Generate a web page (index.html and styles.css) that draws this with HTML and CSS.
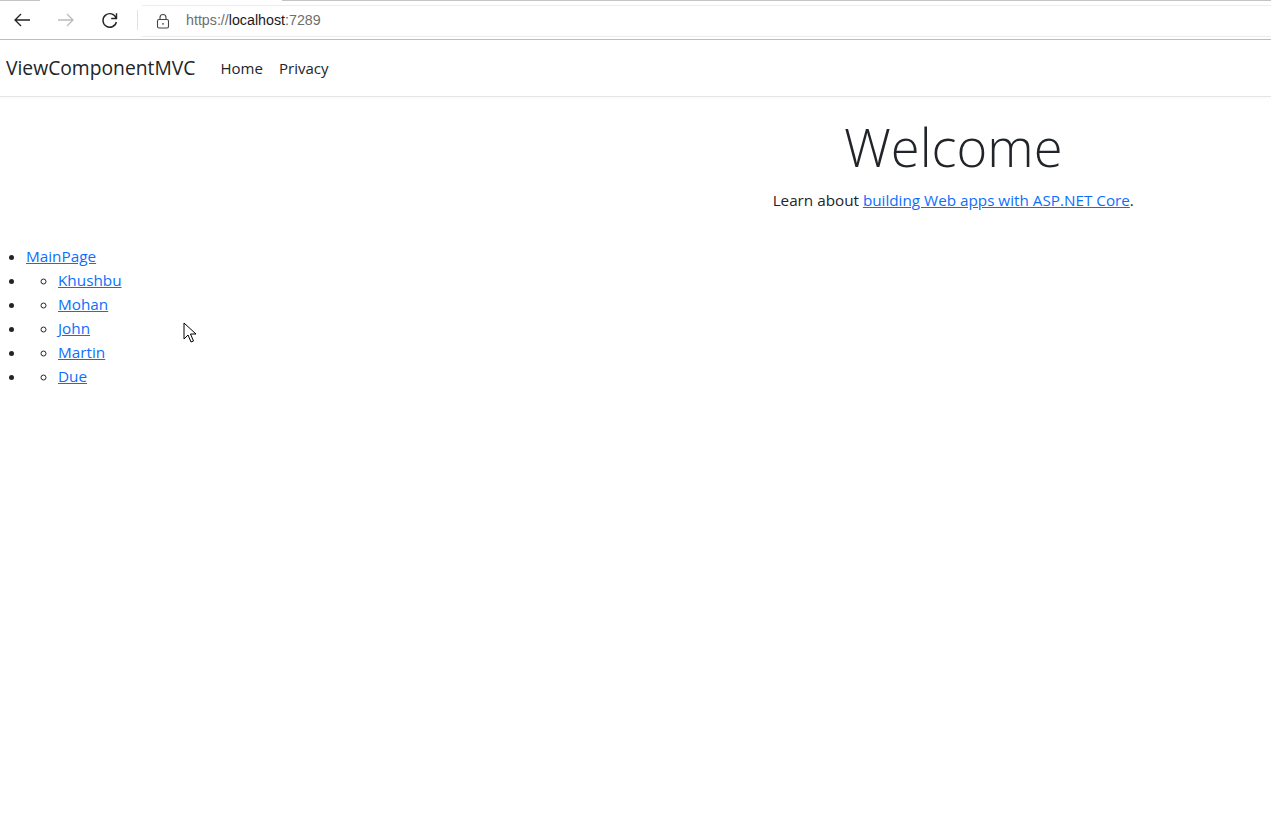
FILE: index.html
```html
<!DOCTYPE html>
<html lang="en">
<head>
  <meta charset="UTF-8">
  <title>Home Page - ViewComponentMVC</title>
  <link rel="stylesheet" href="styles.css">
</head>
<body>
  <div class="chrome">
    <div class="tabline">
      <span class="tab-left"></span>
      <span class="tab-gap"></span>
      <span class="tab-right"></span>
    </div>
    <div class="toolbar">
      <button class="tool" title="Back">
        <svg width="20" height="20" viewBox="0 0 20 20"><path d="M18 10H3M9 4L3 10l6 6" fill="none" stroke="#222" stroke-width="1.3"/></svg>
      </button>
      <button class="tool" title="Forward">
        <svg width="20" height="20" viewBox="0 0 20 20"><path d="M2 10h15M11 4l6 6-6 6" fill="none" stroke="#bbb" stroke-width="1.3"/></svg>
      </button>
      <button class="tool" title="Refresh">
        <svg width="20" height="20" viewBox="0 0 20 20"><path d="M16.2 8.2A6.8 6.8 0 1 0 16.4 12" fill="none" stroke="#222" stroke-width="1.4"/><path d="M16.5 3.2v5.3h-5.3" fill="none" stroke="#222" stroke-width="1.4"/></svg>
      </button>
      <span class="sep"></span>
      <div class="address">
        <svg class="lock" width="14" height="16" viewBox="0 0 14 16"><rect x="1.5" y="6.5" width="11" height="8.5" rx="1.5" fill="none" stroke="#444" stroke-width="1.1"/><path d="M4 6.5V4.5a3 3 0 0 1 6 0v2" fill="none" stroke="#444" stroke-width="1.1"/><circle cx="7" cy="10.8" r="0.9" fill="#444"/></svg>
        <span class="url"><span class="dim">https://</span>localhost<span class="dim">:7289</span></span>
      </div>
    </div>
  </div>

  <header class="navbar">
    <a class="brand" href="#">ViewComponentMVC</a>
    <nav class="nav-links">
      <a href="#">Home</a>
      <a href="#">Privacy</a>
    </nav>
  </header>

  <main class="content">
    <div class="hero">
      <div></div>
      <div class="text-center">
        <h1 class="display-4">Welcome</h1>
        <p>Learn about <a href="#">building Web apps with ASP.NET Core</a>.</p>
      </div>
    </div>

    <ul class="menu">
      <li><a href="#">MainPage</a></li>
      <li><ul><li><a href="#">Khushbu</a></li></ul></li>
      <li><ul><li><a href="#">Mohan</a></li></ul></li>
      <li><ul><li><a href="#">John</a></li></ul></li>
      <li><ul><li><a href="#">Martin</a></li></ul></li>
      <li><ul><li><a href="#">Due</a></li></ul></li>
    </ul>
  </main>

  <svg class="cursor" width="14" height="22" viewBox="0 0 14 22"><path d="M1 1v16l4-4 3 7 2.5-1-3-7h5.5z" fill="#fff" stroke="#000" stroke-width="1"/></svg>
</body>
</html>
```

FILE: styles.css
```css
html, body {
  margin: 0;
  background: #fff;
}

body {
  font-family: "Open Sans", "Liberation Sans", Arial, sans-serif;
  color: #212529;
  font-size: 16px;
  line-height: 1.5;
  position: relative;
  min-height: 814px;
}

/* browser chrome */
.chrome {
  height: 39px;
  border-bottom: 1px solid #bdbdbd;
  position: relative;
}

.tabline {
  display: flex;
  height: 1px;
}

.tab-left {
  width: 40px;
  background: #c4c4c4;
}

.tab-gap {
  width: 242px;
}

.tab-right {
  flex: 1;
  background: #c4c4c4;
}

.toolbar {
  display: flex;
  align-items: center;
  height: 38px;
}

.tool {
  width: 44px;
  height: 32px;
  border: 0;
  background: none;
  padding: 0;
  display: flex;
  align-items: center;
  justify-content: center;
}

.sep {
  width: 1px;
  height: 20px;
  background: #e2e2e2;
  margin: 0 4px 0 5px;
}

.address {
  flex: 1;
  height: 30px;
  margin-top: 1px;
  border-top: 1px solid #ececec;
  border-bottom: 1px solid #ececec;
  display: flex;
  align-items: center;
  padding-left: 14px;
}

.lock {
  margin-right: 16px;
}

.url {
  font-family: "Liberation Sans", Arial, sans-serif;
  font-size: 14.25px;
  color: #1a1a1a;
}

.url .dim {
  color: #6e6e6e;
}

/* site navbar */
.navbar {
  display: flex;
  align-items: center;
  height: 56px;
  border-bottom: 1px solid #e5e5e5;
  box-shadow: 0 1px 2px rgba(0, 0, 0, 0.03);
  padding-left: 6px;
}

.brand {
  font-size: 19.3px;
  color: #212529;
  text-decoration: none;
  margin-right: 19px;
}

.nav-links a {
  color: #212529;
  text-decoration: none;
  font-size: 15px;
  padding: 8px 6px;
}

/* page content */
.hero {
  display: grid;
  grid-template-columns: 1fr 1fr;
  padding-top: 18px;
}

.text-center {
  text-align: center;
}

.display-4 {
  font-size: 52.5px;
  font-weight: 300;
  line-height: 1.2;
  margin: 0 0 10px;
}

p {
  margin: 0 0 32px;
  font-size: 15.25px;
  line-height: 24px;
}

a {
  color: #0d6efd;
}

.menu {
  margin: 0;
  padding-left: 26px;
  font-size: 15.3px;
  line-height: 24px;
}

.menu ul {
  list-style: circle;
  padding-left: 32px;
  margin: 0;
}

.cursor {
  position: absolute;
  left: 183px;
  top: 322px;
}
```
